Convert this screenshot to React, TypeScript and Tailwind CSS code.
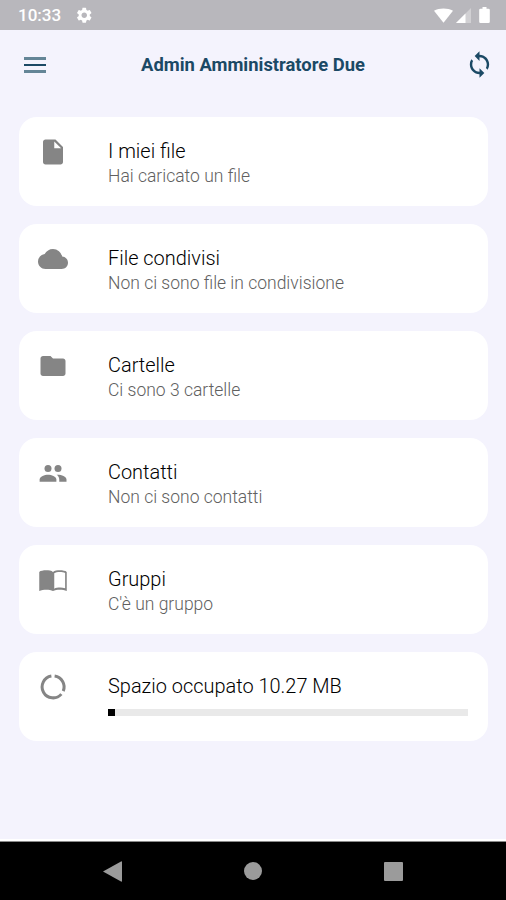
import type { ReactNode } from "react";
import {
  MdCloud,
  MdFolder,
  MdInsertDriveFile,
  MdSettings,
  MdSync,
} from "react-icons/md";

function PeopleIcon() {
  return (
    <svg className="h-[30px] w-[30px]" viewBox="0 0 24 24" fill="currentColor">
      <circle cx="8" cy="8.300" r="2.800" />
      <circle cx="16" cy="8.300" r="2.800" />
      <path d="M1.300 19V17.200C1.300 14.600 5.300 13.300 8 13.300S14.700 14.600 14.700 17.200V19z" />
      <path d="M14.900 13.400C18 13.100 22.800 14.500 22.800 17.200V19H17V17.200C17 15.500 16.100 14.200 14.900 13.400z" />
    </svg>
  );
}

function BookIcon() {
  return (
    <svg className="h-[30px] w-[30px]" viewBox="0 0 24 24" fill="currentColor">
      <path d="M1 5.500C3 4 9.500 3.800 12 5.500C14.500 3.800 21 4 23 5.500V20.800C20 19.500 15 19.300 12 20.800C9 19.300 4 19.500 1 20.800zM13 6.600V18.900C15 18 19 17.800 21.700 18.600V6.400C19.500 5.400 15 5.300 13 6.600z" />
    </svg>
  );
}

function UsageIcon() {
  return (
    <svg className="h-[30px] w-[30px]" viewBox="0 0 24 24" fill="none" stroke="currentColor" strokeWidth="2.400">
      <path d="M13.300 3.200A8.800 8.800 0 0 1 20.200 15.300" />
      <path d="M18.700 17.700A8.800 8.800 0 1 1 10.700 3.200" />
    </svg>
  );
}

const sections = [
  { icon: <MdInsertDriveFile />, title: "I miei file", text: "Hai caricato un file" },
  { icon: <MdCloud />, title: "File condivisi", text: "Non ci sono file in condivisione" },
  { icon: <MdFolder />, title: "Cartelle", text: "Ci sono 3 cartelle" },
  { icon: <PeopleIcon />, title: "Contatti", text: "Non ci sono contatti" },
  { icon: <BookIcon />, title: "Gruppi", text: "C'è un gruppo" },
];

function Card({ icon, title, children }: { icon: ReactNode; title: string; children: ReactNode }) {
  return (
    <div className="flex h-[89px] rounded-[18px] bg-white pl-[19px] pr-5 pt-5">
      <div className="w-[70px] shrink-0 text-[30px] text-[#858585]">{icon}</div>
      <div className="flex-1 pt-px">
        <h2 className="text-[19.95px] font-light leading-[26px] text-black">{title}</h2>
        {children}
      </div>
    </div>
  );
}

function StatusBar() {
  return (
    <div className="flex h-[30px] items-center bg-[#b8b7bc] pl-[18px] pr-4 text-white">
      <span className="pt-px text-[17px] font-medium leading-none">10:33</span>
      <MdSettings className="ml-[13.5px] mt-px size-[18.5px]" />
      <svg className="ml-auto h-[15px] w-[19px]" viewBox="0 0 20 15" fill="currentColor">
        <path d="M0 2.500C5.500-.8 14.500-.8 20 2.500L10 15z" />
      </svg>
      <svg className="ml-[3px] size-[15px]" viewBox="0 0 15 15" fill="currentColor">
        <path d="M0 15L15 0v15z" opacity=".35" />
        <path d="M0 15L9.500 5.500V15z" />
      </svg>
      <svg className="ml-[8px] h-[16px] w-[11px]" viewBox="0 0 11 16" fill="currentColor">
        <path d="M3.500 0h4v1.700H9.500q1.300 0 1.300 1.300V14.700q0 1.300-1.300 1.300H1.500Q.2 16 .2 14.700V3q0-1.300 1.300-1.300h2z" />
      </svg>
    </div>
  );
}

export default function App() {
  return (
    <div className="flex h-[900px] w-[506px] flex-col overflow-hidden bg-[#f4f3fd] font-[Roboto,sans-serif]">
      <StatusBar />
      <header className="grid h-[69px] grid-cols-[60px_1fr_60px] items-center text-[#1b4965]">
        <div className="ml-6 flex w-[22px] flex-col gap-[4px]">
          <div className="h-[3px] bg-[#648597]"></div>
          <div className="h-[2px] bg-[#1b4965]"></div>
          <div className="h-[3px] bg-[#648597]"></div>
        </div>
        <h1 className="text-center text-[18.4px] font-bold leading-6">Admin Amministratore Due</h1>
        <MdSync className="ml-[19px] size-[29px]" />
      </header>
      <main className="flex flex-1 flex-col gap-[18px] pl-[19px] pr-[18px] pt-[18px]">
        {sections.map((section) => (
          <Card key={section.title} icon={section.icon} title={section.title}>
            <p className="text-[17.5px] font-light leading-6 text-[#606060]">{section.text}</p>
          </Card>
        ))}
        <Card icon={<UsageIcon />} title="Spazio occupato 10.27 MB">
          <div className="mt-[10px] h-[7px] bg-[#e9e9e9]">
            <div className="h-full w-[7px] bg-black"></div>
          </div>
        </Card>
      </main>
      <div className="h-[2px] bg-white"></div>
      <nav className="flex h-[59px] items-center border-t border-[#8a8a8a] bg-black text-[#9b9b9b]">
        <svg className="ml-[103px] h-[21px] w-[19px]" viewBox="0 0 19 21" fill="currentColor">
          <path d="M0 10.500L18 .5Q19 0 19 1v19q0 1-1 .5z" />
        </svg>
        <div className="ml-[122px] size-[18px] rounded-full bg-[#9b9b9b]"></div>
        <div className="ml-[122px] size-[19px] rounded-[1px] bg-[#9b9b9b]"></div>
      </nav>
    </div>
  );
}
